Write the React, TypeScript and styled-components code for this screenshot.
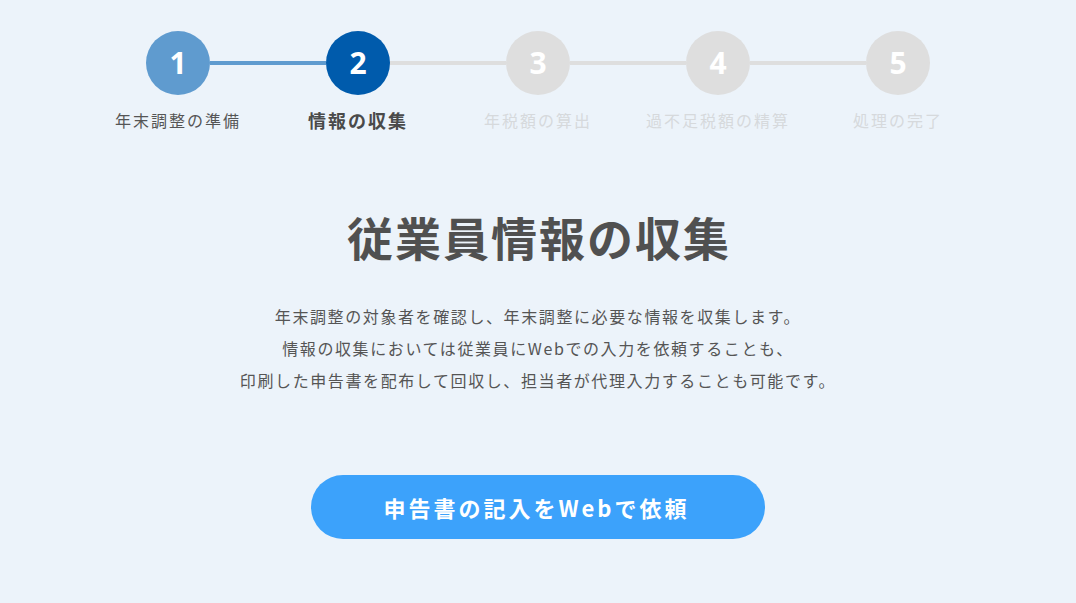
import React from 'react';
import styled, { createGlobalStyle } from 'styled-components';

const GlobalStyle = createGlobalStyle`
  html, body {
    margin: 0;
    padding: 0;
    background: #ecf3fa;
  }
  body {
    font-family: "Noto Sans CJK JP", "Noto Sans", sans-serif;
    color: #555;
  }
`;

type StepState = 'done' | 'current' | 'todo';

const steps: { label: string; state: StepState }[] = [
  { label: '年末調整の準備', state: 'done' },
  { label: '情報の収集', state: 'current' },
  { label: '年税額の算出', state: 'todo' },
  { label: '過不足税額の精算', state: 'todo' },
  { label: '処理の完了', state: 'todo' },
];

const circleColors: Record<StepState, string> = {
  done: '#5f9bcf',
  current: '#005bac',
  todo: '#dedede',
};

const labelColors: Record<StepState, string> = {
  done: '#555',
  current: '#4a4a4a',
  todo: '#d6d9dc',
};

export default function App() {
  return (
    <Page>
      <GlobalStyle />
      <Stepper>
        <Track>
          {steps.map((s, i) => (
            <React.Fragment key={s.label}>
              {i > 0 && <Line $active={s.state !== 'todo'} />}
              <Circle $state={s.state}>{i + 1}</Circle>
            </React.Fragment>
          ))}
        </Track>
        <Labels>
          {steps.map((s) => (
            <Label key={s.label} $state={s.state}>
              {s.label}
            </Label>
          ))}
        </Labels>
      </Stepper>

      <Title>従業員情報の収集</Title>

      <Description>
        <p>年末調整の対象者を確認し、年末調整に必要な情報を収集します。</p>
        <p>情報の収集においては従業員にWebでの入力を依頼することも、</p>
        <p>印刷した申告書を配布して回収し、担当者が代理入力することも可能です。</p>
      </Description>

      <PrimaryButton>申告書の記入をWebで依頼</PrimaryButton>
    </Page>
  );
}

const Page = styled.main`
  width: 1076px;
  height: 603px;
  display: flex;
  flex-direction: column;
  align-items: center;
  padding-top: 31px;
  box-sizing: border-box;
`;

const Stepper = styled.div`
  width: 900px;
  display: flex;
  flex-direction: column;
`;

const Track = styled.div`
  display: flex;
  align-items: center;
  padding: 0 58px;
`;

const Line = styled.div<{ $active: boolean }>`
  flex: 1;
  height: 4px;
  background: ${(p) => (p.$active ? '#5f9bcf' : '#dedede')};
`;

const Circle = styled.div<{ $state: StepState }>`
  width: 64px;
  height: 64px;
  border-radius: 50%;
  flex-shrink: 0;
  display: flex;
  align-items: center;
  justify-content: center;
  background: ${(p) => circleColors[p.$state]};
  color: #fff;
  font-family: "Noto Sans", "DejaVu Sans", sans-serif;
  font-weight: 700;
  font-size: 30px;
  line-height: 1;
`;

const Labels = styled.div`
  display: grid;
  grid-template-columns: repeat(5, 180px);
  align-items: center;
  height: 24px;
  margin-top: 13px;
`;

const Label = styled.div<{ $state: StepState }>`
  text-align: center;
  font-size: ${(p) => (p.$state === 'current' ? '18px' : '16px')};
  letter-spacing: 2px;
  line-height: 24px;
  color: ${(p) => labelColors[p.$state]};
  font-weight: ${(p) => (p.$state === 'current' ? 700 : 400)};
`;

const Title = styled.h1`
  margin: 72px 0 0;
  font-size: 46px;
  line-height: 64px;
  font-weight: 700;
  color: #505050;
  letter-spacing: 2px;
  padding-left: 2px;
`;

const Description = styled.div`
  margin-top: 32px;
  text-align: center;
  font-size: 16px;
  letter-spacing: 1.6px;
  line-height: 32px;
  color: #555;

  p {
    margin: 0;
  }
`;

const PrimaryButton = styled.button`
  margin-top: 79px;
  width: 454px;
  height: 64px;
  border: none;
  border-radius: 32px;
  background: #3ca2fb;
  color: #fff;
  font-family: "Noto Sans CJK JP", "Noto Sans", sans-serif;
  font-size: 22px;
  font-weight: 700;
  letter-spacing: 3px;
  padding-left: 3px;
  cursor: pointer;
`;
